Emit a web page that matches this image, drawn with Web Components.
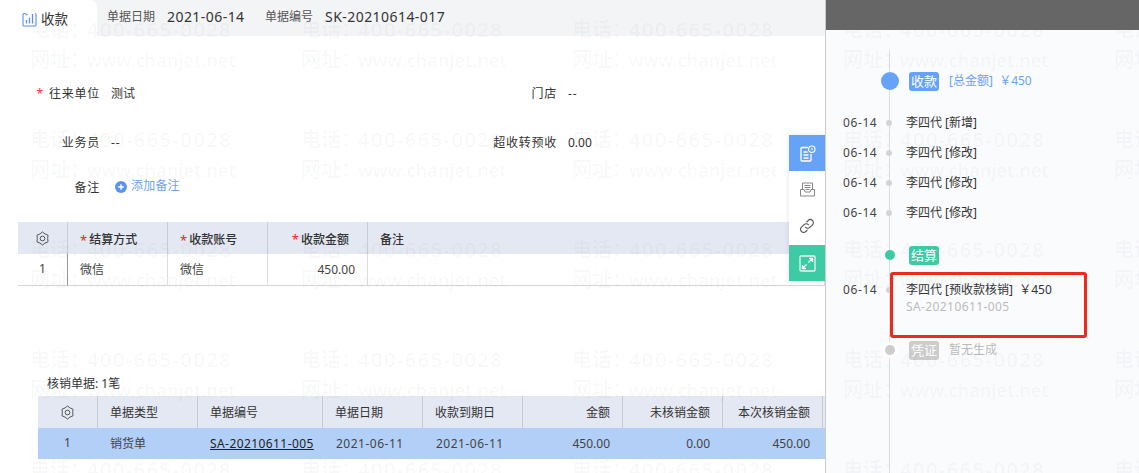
<!DOCTYPE html>
<html lang="zh">
<head>
<meta charset="utf-8">
<title>收款</title>
<style>
  html, body { margin: 0; height: 100%; }
  body {
    width: 1139px; height: 473px; overflow: hidden; position: relative;
    display: grid; grid-template-columns: 825px 1fr;
    font: 12px/1.4 "Noto Sans", "Noto Sans CJK SC", sans-serif; color: #333;
  }
  main-pane { position: relative; }
</style>
</head>
<body>
<main-pane>
  <doc-tabs title-text="收款" doc-date="2021-06-14" doc-no="SK-20210614-017"></doc-tabs>
  <doc-form>
    <form-field label="往来单位" required>测试</form-field>
    <form-field label="门店" second><span style="letter-spacing:1px">--</span></form-field>
    <form-field label="业务员"><span style="letter-spacing:1px">--</span></form-field>
    <form-field label="超收转预收" second>0.00</form-field>
    <form-field label="备注" wide><add-note></add-note></form-field>
  </doc-form>
  <data-table id="settle" style="margin:22px 0 0 18px;--head-pad:4px;--head-weight:500" cols="50 100 100 100 1fr"></data-table>
  <table-caption>核销单据: 1笔</table-caption>
  <data-table id="verify" style="margin-left:38px;--head-pad:2px;--head-weight:400" cols="60 100 125 100 100 100 100 100 2px" selected></data-table>
  <side-tools></side-tools>
</main-pane>
<time-panel>
  <time-head color="#66a3f6" tag="收款" size="big" style="margin-top:39px"><span style="color:#66a3f6">[总金额]&nbsp;&nbsp;￥450</span></time-head>
  <time-row date="06-14" style="margin-top:15px">李四代 [新增]</time-row>
  <time-row date="06-14">李四代 [修改]</time-row>
  <time-row date="06-14">李四代 [修改]</time-row>
  <time-row date="06-14">李四代 [修改]</time-row>
  <time-head color="#3ccba4" tag="结算" style="margin-top:15px"></time-head>
  <time-row date="06-14" sub="SA-20210611-005" style="margin-top:14px">李四代 [预收款核销]&nbsp;&nbsp;￥450</time-row>
  <time-head color="#ccc" tag="凭证" halo style="margin-top:22px"><span style="color:#bbb">暂无生成</span></time-head>
</time-panel>
<water-mark></water-mark>
<top-shade></top-shade>

<script>
  // small helper, every element here just sets its shadow html once
  class Base extends HTMLElement {
    constructor() {
      super();
      this.attachShadow({ mode: "open" });
    }
    connectedCallback() {
      this.shadowRoot.innerHTML = this.render();
    }
  }

  const GEAR = `<svg width="15" height="15" viewBox="0 0 16 16" fill="none" stroke="#555" stroke-width="1.05" stroke-linejoin="round"><path d="M8 1 10.6 3.1 13.9 4.5 13.5 8 13.9 11.5 10.6 12.9 8 15 5.4 12.9 2.1 11.5 2.5 8 2.1 4.5 5.4 3.1z"/><circle cx="8" cy="8" r="2.5"/></svg>`;

  class DocTabs extends Base {
    render() {
      return `<style>
        :host { display: flex; align-items: stretch; height: 36px; background: #f3f4f6; }
        .tab { width: 97px; box-sizing: border-box; background: #fff; border-radius: 0 8px 0 0; display: flex; align-items: center; gap: 4px; padding: 3px 0 0 22px; font-size: 13.5px; color: #333; }
        .meta { display: flex; align-items: center; padding: 0 0 2px 10px; }
        .lab { color: #555; width: 60px; }
        .val { font-size: 14px; letter-spacing: .45px; color: #333; }
        .val.date { width: 98px; }
        svg { display: block; margin-top: -1px; }
      </style>
      <div class="tab">
        <svg width="15" height="15" viewBox="0 0 15 15" fill="none" stroke="#5b8def" stroke-width="1.1"><path d="M3.5 1.5H2a1 1 0 0 0-1 1V13a1 1 0 0 0 1 1h11a1 1 0 0 0 1-1V2.5a1 1 0 0 0-1-1"/><path d="M4.5 8v3.5M7.5 5.5v6M10.5 2v9.5M3.5 2.5h2" stroke-width="1.3"/></svg>
        <span>${this.getAttribute("title-text")}</span>
      </div>
      <div class="meta">
        <span class="lab">单据日期</span><span class="val date">${this.getAttribute("doc-date")}</span>
        <span class="lab">单据编号</span><span class="val">${this.getAttribute("doc-no")}</span>
      </div>`;
    }
  }

  class DocForm extends Base {
    render() {
      return `<style>
        :host { display: grid; grid-template-columns: 458px 1fr; grid-template-rows: 49px 45px 24px; margin-top: 46px; }
        ::slotted([wide]) { grid-column: 1 / -1; }
      </style><slot></slot>`;
    }
  }

  class FormField extends Base {
    render() {
      const w = this.hasAttribute("second") ? 99 : 100;
      const star = this.hasAttribute("required") ? `<i>*</i>` : "";
      return `<style>
        :host { display: grid; grid-template-columns: ${w}px 1fr; column-gap: 11px; align-items: center; align-self: start; height: 24px; color: #333; }
        .lab { text-align: right; letter-spacing: .75px; }
        i { color: #e33; font-style: normal; margin-right: 5px; }
      </style>
      <div class="lab">${star}${this.getAttribute("label")}</div><div><slot></slot></div>`;
    }
  }

  class AddNote extends Base {
    render() {
      return `<style>
        :host { display: inline-flex; align-items: center; gap: 4px; margin-left: 4px; color: #6fa3ea; letter-spacing: .2px; }
        svg { display: block; }
      </style>
      <svg width="12" height="12" viewBox="0 0 12 12"><circle cx="6" cy="6" r="6" fill="#5b94ee"/><path d="M3.2 6h5.6M6 3.2v5.6" stroke="#fff" stroke-width="1.4"/></svg>
      <span>添加备注</span>`;
    }
  }

  class DataTable extends Base {
    render() {
      const cols = this.getAttribute("cols").split(" ").map((c) => (/^\d+$/.test(c) ? c + "px" : c)).join(" ");
      const d = this.tableData || { head: [], rows: [] };
      const cell = (c, i, kind) => {
        const right = (d.right || []).includes(i) ? " r" : "";
        const center = i === 0 ? " c" : "";
        return `<div class="${kind}${right}${center}">${c}</div>`;
      };
      return `<style>
        :host { display: grid; grid-template-columns: ${cols}; color: #333; }
        .h { height: 32px; box-sizing: border-box; background: #e4e8f3; border-right: 1px solid #c9ccd4; padding: var(--head-pad, 2px) 12px 0; display: flex; align-items: center; font-weight: var(--head-weight, 400); color: #333; }
        .h:first-child { border-right-color: #888; }
        .b { height: 32px; box-sizing: border-box; padding: 2px 12px 0; display: flex; align-items: center; white-space: nowrap; border-right: 1px solid #ddd; border-bottom: 1px solid #d5d5d5; color: #444; }
        .b.first { border-right-color: #999; }
        .r { justify-content: flex-end; }
        .h.c { justify-content: center; padding: 0; }
        .b.c { justify-content: center; padding: 0; }
        b { color: #e22; font-weight: 400; margin-right: 2px; font-size: 13px; line-height: 1; }
        u { color: #222; letter-spacing: .42px; }
        em { font-style: normal; letter-spacing: .5px; margin-left: 1px; }
        :host([selected]) .b { background: #b2d0f7; border-right-color: transparent; border-bottom-color: transparent; height: 31px; }
      </style>
      ${d.head.map((c, i) => cell(c, i, "h")).join("")}
      ${d.rows.map((c, i) => cell(c, i, i === 0 ? "b first" : "b")).join("")}`;
    }
  }

  class TableCaption extends Base {
    render() {
      return `<style>:host { display: block; margin: 89px 0 3px 47px; height: 18px; line-height: 18px; color: #333; }</style><slot></slot>`;
    }
  }

  class SideTools extends Base {
    render() {
      return `<style>
        :host { position: absolute; right: 0; top: 135px; width: 36px; display: flex; flex-direction: column; background: #fff; box-shadow: 0 0 6px rgba(0,0,0,.1); z-index: 5; }
        div { height: 36px; display: flex; align-items: center; justify-content: center; }
        .link { height: 38px; }
        .blue { background: #66a3f6; }
        .green { background: #3ccba4; }
      </style>
      <div class="blue"><svg width="17" height="17" viewBox="0 0 17 17" fill="none" stroke="#fff" stroke-width="1.3"><path d="M9 2.5H3a1 1 0 0 0-1 1V15a1 1 0 0 0 1 1h8a1 1 0 0 0 1-1V9"/><path d="M4.5 7h4M4.5 10h5M4.5 13h5"/><circle cx="12.8" cy="4.2" r="3.2" stroke-width="1.1"/><path d="M12.8 2.8v1.6h1.3" stroke-width=".9"/></svg></div>
      <div><svg width="17" height="17" viewBox="0 0 17 17" fill="none" stroke="#888" stroke-width="1"><path d="M3.5 9V2h10v7M1.5 8.5V15h14V8.5H12l-1 2.5H6L5 8.5z"/><path d="M5.5 4.5h6M5.5 6.5h6M6.5 8.5h4"/></svg></div>
      <div class="link"><svg width="16" height="16" viewBox="0 0 16 16" fill="none" stroke="#555" stroke-width="1.1" stroke-linecap="round"><path d="M6.6 9.4a3 3 0 0 0 4.3 0l2.6-2.6a3 3 0 0 0-4.3-4.3L7.8 3.9"/><path d="M9.4 6.6a3 3 0 0 0-4.3 0L2.5 9.2a3 3 0 0 0 4.3 4.3l1.4-1.4"/></svg></div>
      <div class="green"><svg width="17" height="17" viewBox="0 0 17 17" fill="none" stroke="#fff" stroke-width="1.3"><rect x="1" y="1" width="15" height="15" rx="1" stroke-opacity=".85"/><path d="M10 3.5h3.5V7M13.5 3.5 9.5 7.5M7 13.5H3.5V10M3.5 13.5l4-4"/></svg></div>`;
    }
  }

  class TimePanel extends Base {
    render() {
      return `<style>
        :host { display: block; position: relative; height: 473px; box-sizing: border-box; padding-top: 30px;
          border-left: 1px solid #ccc;
          background: linear-gradient(#ddd, #ddd) no-repeat 63px 50px / 1px 100%, #fafbfd; }
        .mark { position: absolute; left: 64px; top: 272px; width: 197px; height: 66px; box-sizing: border-box; border: 3px solid #ee2a1f; border-radius: 3px; z-index: 6; }
      </style><slot></slot><div class="mark"></div>`;
    }
  }

  class TimeHead extends Base {
    render() {
      const big = this.getAttribute("size") === "big";
      const s = big ? 18 : 10;
      const halo = this.hasAttribute("halo") ? "box-shadow:0 0 0 3px #fff;" : "";
      return `<style>
        :host { display: grid; grid-template-columns: 18px 1fr; margin-left: 55px; height: 24px; align-items: center; }
        .dot { width: ${s}px; height: ${s}px; border-radius: 50%; background: ${this.getAttribute("color")}; justify-self: center; ${halo} }
        .wrap { display: flex; align-items: center; gap: 10px; margin-left: 10px; }
        .tag { width: 30px; height: 19px; border-radius: 3px; background: ${this.getAttribute("color")}; color: #fff; font-size: 13px; line-height: 19px; text-align: center; }
      </style>
      <div class="dot"></div>
      <div class="wrap"><span class="tag">${this.getAttribute("tag")}</span><span><slot></slot></span></div>`;
    }
  }

  class TimeRow extends Base {
    render() {
      const sub = this.getAttribute("sub");
      return `<style>
        :host { display: grid; grid-template-columns: 38px 18px 1fr; margin-left: 17px; min-height: 30px; align-items: start; line-height: 30px; color: #333; }
        :host([sub]) { line-height: 17px; min-height: 35px; }
        .date { white-space: nowrap; letter-spacing: .6px; color: #444; }
        .dot { width: 6px; height: 6px; border-radius: 50%; background: #d4d4d4; justify-self: center; margin-top: 12px; margin-left: -2px; }
        :host([sub]) .dot { margin-top: 6px; }
        .t { padding-left: 7px; }
        .s { color: #bbb; letter-spacing: .4px; }
      </style>
      <div class="date">${this.getAttribute("date")}</div><div class="dot"></div>
      <div class="t"><slot></slot>${sub ? `<div class="s">${sub}</div>` : ""}</div>`;
    }
  }

  // repeated background text, lies over the whole page
  class WaterMark extends Base {
    render() {
      let cells = "";
      for (let i = 0; i < 25; i++) {
        cells += `<div><span>电话：</span>400-665-0028<br><span>网址：</span><small>www.chanjet.net</small></div>`;
      }
      return `<style>
        :host { position: absolute; inset: 0; overflow: hidden; pointer-events: none; z-index: 2; }
        .grid { position: absolute; left: 30px; top: 15px; display: grid; grid-template-columns: repeat(5, 271px); grid-auto-rows: 110px; }
        .grid div { font-size: 20px; line-height: 30px; letter-spacing: 1.5px; font-weight: 500; color: rgba(40,50,70,.042); white-space: nowrap; }
        span { letter-spacing: 0; margin-right: -3px; }
        small { font-size: 18px; letter-spacing: .25px; }
      </style><div class="grid">${cells}</div>`;
    }
  }

  class TopShade extends Base {
    render() {
      return `<style>:host { position: absolute; left: 826px; right: 0; top: 0; height: 30px; background: #666; z-index: 3; }</style>`;
    }
  }

  customElements.define("doc-tabs", DocTabs);
  customElements.define("doc-form", DocForm);
  customElements.define("form-field", FormField);
  customElements.define("add-note", AddNote);
  customElements.define("table-caption", TableCaption);
  customElements.define("side-tools", SideTools);
  customElements.define("time-panel", TimePanel);
  customElements.define("time-head", TimeHead);
  customElements.define("time-row", TimeRow);
  customElements.define("water-mark", WaterMark);
  customElements.define("top-shade", TopShade);
  customElements.define("main-pane", class extends Base {
    render() { return `<style>:host { display: block; position: relative; height: 473px; overflow: hidden; }</style><slot></slot>`; }
  });

  // table data has to be there before upgrade renders it
  document.getElementById("settle").tableData = {
    right: [3],
    head: [GEAR, "<b>*</b>结算方式", "<b>*</b>收款账号", `<span style="margin-right:6px"><b>*</b>收款金额</span>`, "备注"],
    rows: ["1", "微信", "微信", "450.00", ""],
  };
  document.getElementById("verify").tableData = {
    right: [5, 6, 7],
    head: [GEAR, "单据类型", "单据编号", "单据日期", "收款到期日", "金额", "未核销金额", "本次核销金额", ""],
    rows: ["1", "销货单", "<u>SA-20210611-005</u>", "<em>2021-06-11</em>", "<em>2021-06-11</em>", "450.00", "0.00", "450.00", ""],
  };
  customElements.define("data-table", DataTable);
</script>
</body>
</html>
